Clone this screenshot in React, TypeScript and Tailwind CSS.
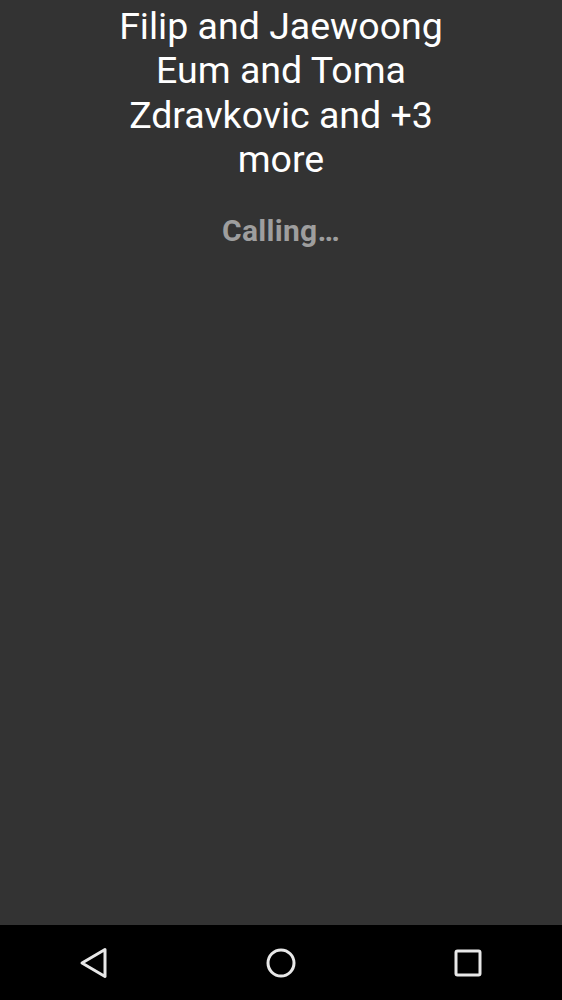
export default function App() {
  return (
    <div className="flex h-[1000px] w-[562px] flex-col bg-[#333333]" style={{ fontFamily: "Roboto, 'Liberation Sans', sans-serif" }}>
      {/* caller names + status */}
      <div className="flex flex-1 flex-col items-center pt-[4px]">
        <h1 className="w-[392px] text-center text-[37.5px] font-normal leading-[44.3px] text-white">
          Filip and Jaewoong Eum and Toma Zdravkovic and +3 more
        </h1>
        <p className="mt-[32px] text-[30px] font-bold leading-[36px] tracking-[0.3px] text-[#9e9e9e]">Calling…</p>
      </div>

      {/* nav bar */}
      <div className="grid h-[75px] grid-cols-3 items-center bg-black">
        <div className="flex justify-center">
          <svg width="30" height="32" viewBox="0 0 30 32" fill="none" stroke="#e8e8e8" strokeWidth="3" strokeLinejoin="round">
            <path d="M26 2.5 L3 16 L26 29.5 Z" />
          </svg>
        </div>
        <div className="flex justify-center">
          <svg width="32" height="32" viewBox="0 0 32 32" fill="none" stroke="#e8e8e8" strokeWidth="3">
            <circle cx="16" cy="16" r="13" />
          </svg>
        </div>
        <div className="flex justify-center">
          <svg width="30" height="30" viewBox="0 0 30 30" fill="none" stroke="#e8e8e8" strokeWidth="3">
            <rect x="3" y="3" width="24" height="24" rx="1.5" />
          </svg>
        </div>
      </div>
    </div>
  );
}
